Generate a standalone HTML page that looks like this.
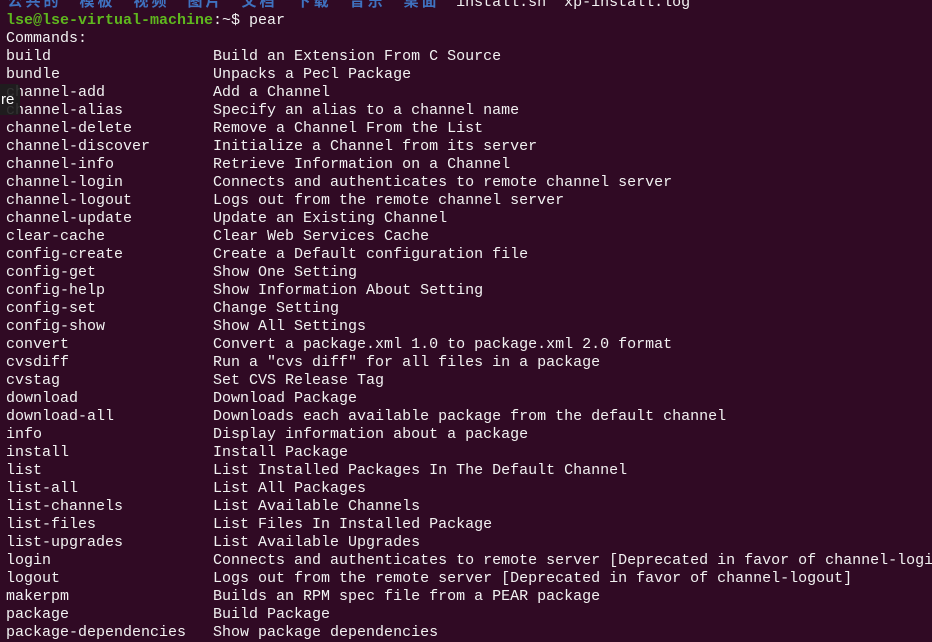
<!DOCTYPE html>
<html><head><meta charset="utf-8"><style>
html,body{margin:0;padding:0;width:932px;height:642px;overflow:hidden;background:#300a24;}
#t{position:absolute;left:6px;top:-6px;font-family:"Liberation Mono",monospace;font-size:15px;line-height:18px;color:#f2f2f2;white-space:pre;}
.b{color:#3f72c0;font-weight:bold;font-family:"Liberation Mono","Noto Sans CJK SC",monospace;}
.c{display:inline-block;width:18px;text-align:center;}
.g{color:#5fb81e;font-weight:bold;}
#tip{position:absolute;left:0;top:84px;width:19px;height:31px;background:rgba(30,30,30,0.9);border-radius:0 3px 3px 0;color:#fff;font-family:"Liberation Sans",sans-serif;font-size:15px;line-height:31px;padding-left:1px;}
</style></head><body>
<div id="t"><span class="b"><span class="c">公</span><span class="c">共</span><span class="c">的</span>  <span class="c">模</span><span class="c">板</span>  <span class="c">视</span><span class="c">频</span>  <span class="c">图</span><span class="c">片</span>  <span class="c">文</span><span class="c">档</span>  <span class="c">下</span><span class="c">载</span>  <span class="c">音</span><span class="c">乐</span>  <span class="c">桌</span><span class="c">面</span></span>  install.sh  xp-install.log
<span class="g">lse@lse-virtual-machine</span>:~$ pear
Commands:
build                  Build an Extension From C Source
bundle                 Unpacks a Pecl Package
channel-add            Add a Channel
channel-alias          Specify an alias to a channel name
channel-delete         Remove a Channel From the List
channel-discover       Initialize a Channel from its server
channel-info           Retrieve Information on a Channel
channel-login          Connects and authenticates to remote channel server
channel-logout         Logs out from the remote channel server
channel-update         Update an Existing Channel
clear-cache            Clear Web Services Cache
config-create          Create a Default configuration file
config-get             Show One Setting
config-help            Show Information About Setting
config-set             Change Setting
config-show            Show All Settings
convert                Convert a package.xml 1.0 to package.xml 2.0 format
cvsdiff                Run a "cvs diff" for all files in a package
cvstag                 Set CVS Release Tag
download               Download Package
download-all           Downloads each available package from the default channel
info                   Display information about a package
install                Install Package
list                   List Installed Packages In The Default Channel
list-all               List All Packages
list-channels          List Available Channels
list-files             List Files In Installed Package
list-upgrades          List Available Upgrades
login                  Connects and authenticates to remote server [Deprecated in favor of channel-login]
logout                 Logs out from the remote server [Deprecated in favor of channel-logout]
makerpm                Builds an RPM spec file from a PEAR package
package                Build Package
package-dependencies   Show package dependencies
</div>
<div id="tip">re</div>
</body></html>
